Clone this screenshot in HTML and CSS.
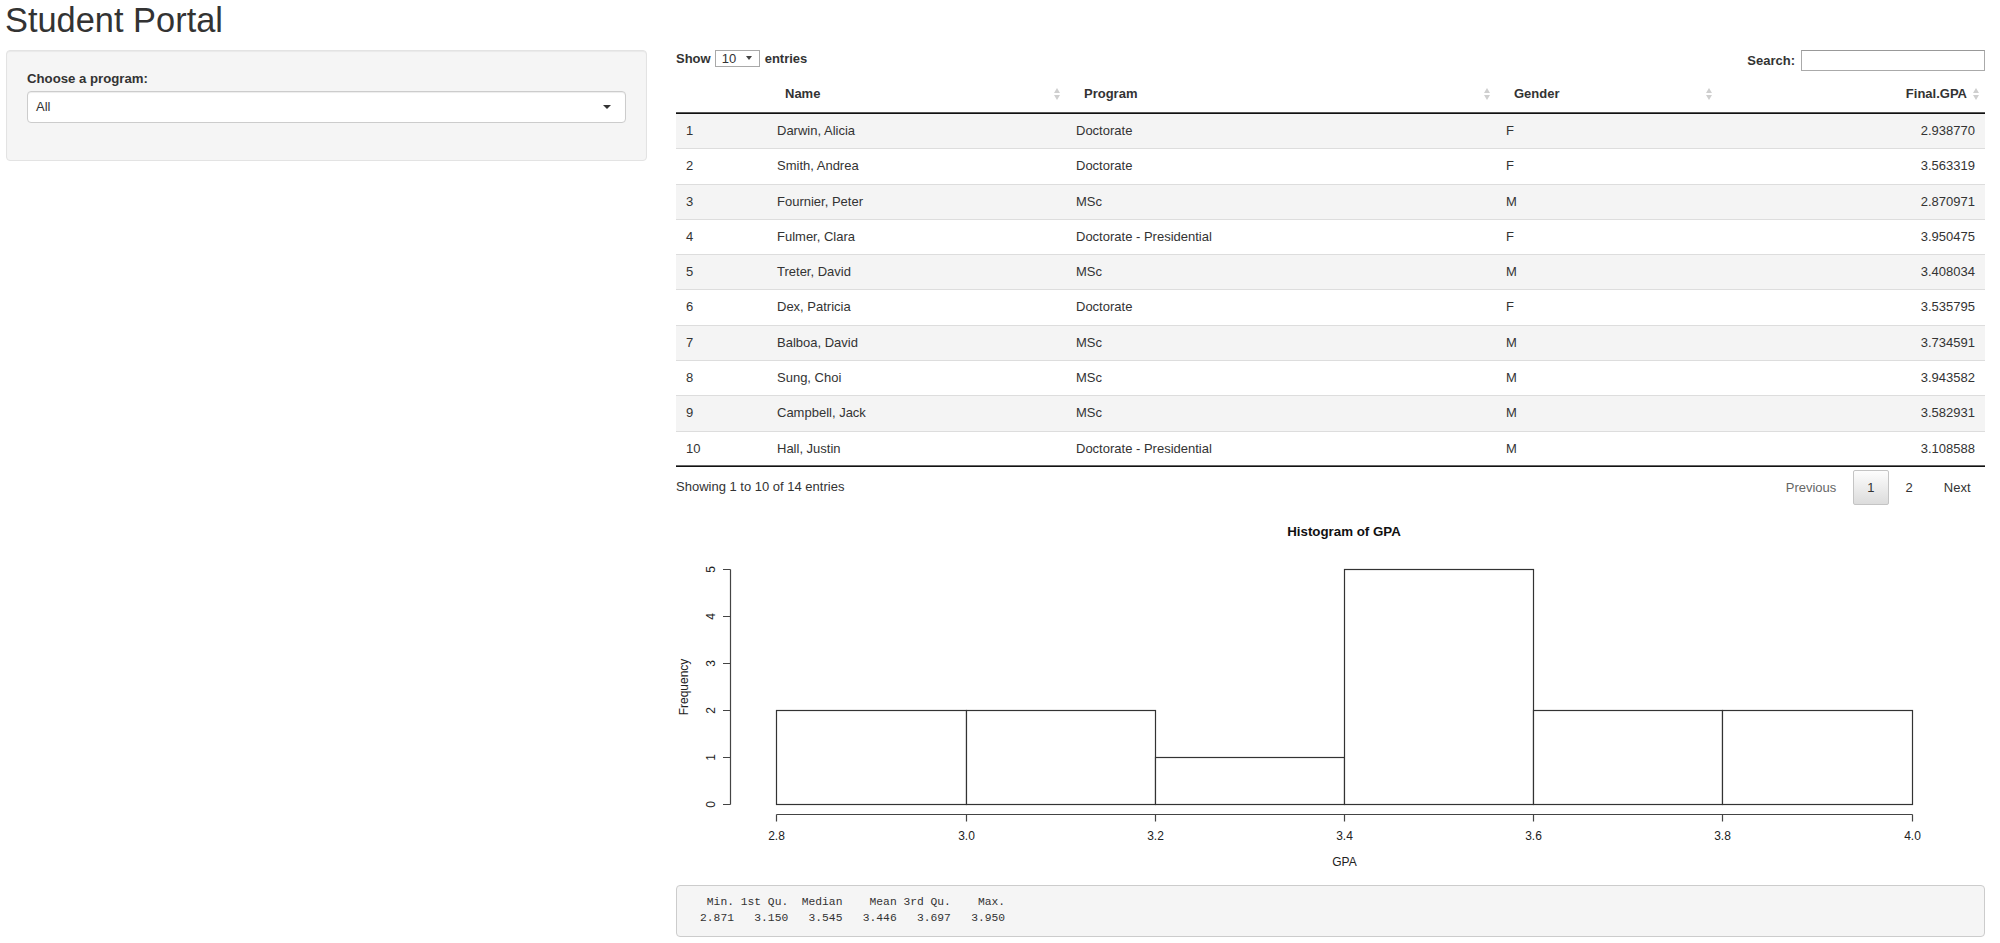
FILE: index.html
```html
<!DOCTYPE html>
<html lang="en">
<head>
<meta charset="utf-8">
<title>Student Portal</title>
<link rel="stylesheet" href="styles.css">
</head>
<body>
<h1 class="title">Student Portal</h1>
<div class="layout">
  <aside class="sidebar">
    <div class="well">
      <label class="ctl-label">Choose a program:</label>
      <div class="select-box"><span>All</span><span class="caret"></span></div>
    </div>
  </aside>
  <main class="main">
    <div class="dt-top">
      <div class="dt-length">Show <span class="len-select"><span>10</span><span class="mini-caret"></span></span> entries</div>
      <div class="dt-filter">Search: <span class="search-input"></span></div>
    </div>
    <table class="dt">
      <colgroup>
        <col class="c1"><col class="c2"><col class="c3"><col class="c4"><col class="c5">
      </colgroup>
      <thead>
        <tr><th></th><th class="sort">Name</th><th class="sort">Program</th><th class="sort">Gender</th><th class="sort num">Final.GPA</th></tr>
      </thead>
      <tbody>
        <tr><td>1</td><td>Darwin, Alicia</td><td>Doctorate</td><td>F</td><td class="num">2.938770</td></tr>
        <tr><td>2</td><td>Smith, Andrea</td><td>Doctorate</td><td>F</td><td class="num">3.563319</td></tr>
        <tr><td>3</td><td>Fournier, Peter</td><td>MSc</td><td>M</td><td class="num">2.870971</td></tr>
        <tr><td>4</td><td>Fulmer, Clara</td><td>Doctorate - Presidential</td><td>F</td><td class="num">3.950475</td></tr>
        <tr><td>5</td><td>Treter, David</td><td>MSc</td><td>M</td><td class="num">3.408034</td></tr>
        <tr><td>6</td><td>Dex, Patricia</td><td>Doctorate</td><td>F</td><td class="num">3.535795</td></tr>
        <tr><td>7</td><td>Balboa, David</td><td>MSc</td><td>M</td><td class="num">3.734591</td></tr>
        <tr><td>8</td><td>Sung, Choi</td><td>MSc</td><td>M</td><td class="num">3.943582</td></tr>
        <tr><td>9</td><td>Campbell, Jack</td><td>MSc</td><td>M</td><td class="num">3.582931</td></tr>
        <tr><td>10</td><td>Hall, Justin</td><td>Doctorate - Presidential</td><td>M</td><td class="num">3.108588</td></tr>
      </tbody>
    </table>
    <div class="dt-bottom">
      <div class="dt-info">Showing 1 to 10 of 14 entries</div>
      <div class="dt-paginate">
        <span class="pg-btn disabled">Previous</span>
        <span class="pg-btn current">1</span>
        <span class="pg-btn">2</span>
        <span class="pg-btn">Next</span>
      </div>
    </div>
    <svg class="hist" width="1309" height="380" viewBox="0 0 1309 380">
      <text class="h-title" x="668" y="31" text-anchor="middle">Histogram of GPA</text>
      <g class="bars">
        <rect x="100.5" y="205.5" width="190" height="94"/>
        <rect x="290.5" y="205.5" width="189" height="94"/>
        <rect x="479.5" y="252.5" width="189" height="47"/>
        <rect x="668.5" y="64.5" width="189" height="235"/>
        <rect x="857.5" y="205.5" width="189" height="94"/>
        <rect x="1046.5" y="205.5" width="190" height="94"/>
      </g>
      <path class="axis" d="M54.5 299.5 V64.5 M47 299.5 H54.5 M47 252.5 H54.5 M47 205.5 H54.5 M47 158.5 H54.5 M47 111.5 H54.5 M47 64.5 H54.5"/>
      <path class="axis" d="M100.5 309.5 H1236.5 M100.5 309.5 V316.5 M290.5 309.5 V316.5 M479.5 309.5 V316.5 M668.5 309.5 V316.5 M857.5 309.5 V316.5 M1046.5 309.5 V316.5 M1236.5 309.5 V316.5"/>
      <g class="ylab">
        <text transform="translate(35,299.5) rotate(-90)">0</text>
        <text transform="translate(35,252.5) rotate(-90)">1</text>
        <text transform="translate(35,205.5) rotate(-90)">2</text>
        <text transform="translate(35,158.5) rotate(-90)">3</text>
        <text transform="translate(35,111.5) rotate(-90)">4</text>
        <text transform="translate(35,64.5) rotate(-90)">5</text>
        <text transform="translate(8,182) rotate(-90)">Frequency</text>
      </g>
      <g class="xlab">
        <text x="100.5" y="334.5">2.8</text>
        <text x="290.5" y="334.5">3.0</text>
        <text x="479.5" y="334.5">3.2</text>
        <text x="668.5" y="334.5">3.4</text>
        <text x="857.5" y="334.5">3.6</text>
        <text x="1046.5" y="334.5">3.8</text>
        <text x="1236.5" y="334.5">4.0</text>
        <text x="668.5" y="360.5">GPA</text>
      </g>
    </svg>
    <pre class="summary">   Min. 1st Qu.  Median    Mean 3rd Qu.    Max. 
  2.871   3.150   3.545   3.446   3.697   3.950 </pre>
  </main>
</div>
</body>
</html>
```
FILE: styles.css
```css
* { box-sizing: border-box; }

body {
  margin: 0;
  font-family: "Liberation Sans", Arial, Helvetica, sans-serif;
  color: #333;
  background: #fff;
}

.title {
  margin: 0;
  padding-left: 5px;
  font-size: 34.4px;
  font-weight: normal;
  line-height: 40px;
  color: #333;
}

.layout {
  display: flex;
  align-items: flex-start;
  margin-top: 9.5px;
  padding-left: 6px;
}

.sidebar {
  flex: none;
  width: 641px;
}

.main {
  flex: none;
  width: 1309px;
  margin-left: 29px;
  display: flex;
  flex-direction: column;
}

/* sidebar well */
.well {
  background: #f5f5f5;
  border: 1px solid #e3e3e3;
  border-radius: 4px;
  box-shadow: inset 0 1px 1px rgba(0, 0, 0, .05);
  padding: 19px 20px;
}

.ctl-label {
  display: block;
  font-weight: bold;
  font-size: 13.2px;
  line-height: 17px;
  margin-bottom: 4px;
}

.select-box {
  height: 32px;
  border: 1px solid #ccc;
  border-radius: 4px;
  background: #fff;
  box-shadow: inset 0 1px 1px rgba(0, 0, 0, .075);
  display: flex;
  align-items: center;
  justify-content: space-between;
  padding: 0 14px 0 8px;
  font-size: 13px;
  margin-bottom: 18px;
}

.caret {
  width: 0;
  height: 0;
  border-left: 4px solid transparent;
  border-right: 4px solid transparent;
  border-top: 4px solid #333;
}

/* datatable top controls */
.dt-top {
  display: flex;
  justify-content: space-between;
  align-items: flex-start;
  margin-bottom: 3.5px;
  font-size: 13px;
  font-weight: bold;
}

.dt-length {
  display: flex;
  align-items: center;
  line-height: 17px;
}

.len-select {
  display: inline-flex;
  align-items: center;
  justify-content: space-between;
  width: 45px;
  height: 17px;
  margin: 0 5px 0 4px;
  padding: 0 7px 0 6px;
  border: 1px solid #a9a9a9;
  background: #fff;
  font-weight: normal;
  font-size: 13px;
}

.mini-caret {
  width: 0;
  height: 0;
  border-left: 3px solid transparent;
  border-right: 3px solid transparent;
  border-top: 4px solid #444;
}

.dt-filter {
  display: flex;
  align-items: center;
  height: 21px;
}

.search-input {
  display: inline-block;
  width: 184px;
  height: 21px;
  margin-left: 6px;
  border: 1px solid #aaa;
  border-top-color: #999;
  background: #fff;
}

/* table */
.dt {
  width: 1309px;
  border-collapse: collapse;
  table-layout: fixed;
  font-size: 13px;
}

.c1 { width: 91px; }
.c2 { width: 299px; }
.c3 { width: 430px; }
.c4 { width: 222px; }
.c5 { width: 267px; }

.dt th {
  position: relative;
  padding: 10px 18px;
  line-height: 19px;
  font-weight: bold;
  text-align: left;
  border-bottom: 1px solid #111;
  box-shadow: inset 0 -1px 0 #555;
}

.dt th.sort::before,
.dt th.sort::after {
  content: "";
  position: absolute;
  right: 6px;
  width: 0;
  height: 0;
  border-left: 3.5px solid transparent;
  border-right: 3.5px solid transparent;
}

.dt th.sort::before {
  top: calc(50% - 6px);
  border-bottom: 5px solid #cfcfcf;
}

.dt th.sort::after {
  top: calc(50% + 1px);
  border-top: 5px solid #cfcfcf;
}

.dt td {
  padding: 8px 10px;
  line-height: 18.3px;
  border-top: 1px solid #ddd;
}

.dt tbody tr:first-child td { border-top: none; }
.dt tbody tr:last-child td { border-bottom: 1px solid #111; box-shadow: inset 0 -1px 0 #666; }
.dt tbody tr:nth-child(odd) { background: #f4f4f4; }

.dt .num { text-align: right; }

/* bottom of table */
.dt-bottom {
  display: flex;
  justify-content: space-between;
  align-items: flex-start;
  font-size: 13px;
}

.dt-info {
  padding-top: 10.5px;
  line-height: 19px;
}

.dt-paginate {
  display: flex;
  padding-top: 3px;
}

.pg-btn {
  display: block;
  margin-left: 2px;
  padding: 7px 13.5px;
  line-height: 19px;
  border: 1px solid transparent;
  border-radius: 2px;
  color: #333;
  text-align: center;
}

.pg-btn.disabled { color: #666; }

.pg-btn.current {
  border-color: #c4c4c4;
  background: linear-gradient(to bottom, #fdfdfd 0%, #dcdcdc 100%);
}

/* histogram */
.hist {
  display: block;
  font-family: "Liberation Sans", Arial, Helvetica, sans-serif;
}

.h-title {
  font-size: 13.3px;
  font-weight: bold;
  fill: #111;
}

.bars rect {
  fill: #fff;
  stroke: #333;
  stroke-width: 1.2;
}

.axis {
  fill: none;
  stroke: #444;
  stroke-width: 1.2;
}

.ylab text {
  font-size: 12px;
  fill: #222;
  text-anchor: middle;
  dominant-baseline: central;
}

.xlab text {
  font-size: 12px;
  fill: #222;
  text-anchor: middle;
}

/* summary output */
.summary {
  margin: 0;
  padding: 9.5px;
  background: #f5f5f5;
  border: 1px solid #ccc;
  border-radius: 4px;
  font-family: "Liberation Mono", "DejaVu Sans Mono", monospace;
  font-size: 11.3px;
  line-height: 15.3px;
  color: #333;
}
```
